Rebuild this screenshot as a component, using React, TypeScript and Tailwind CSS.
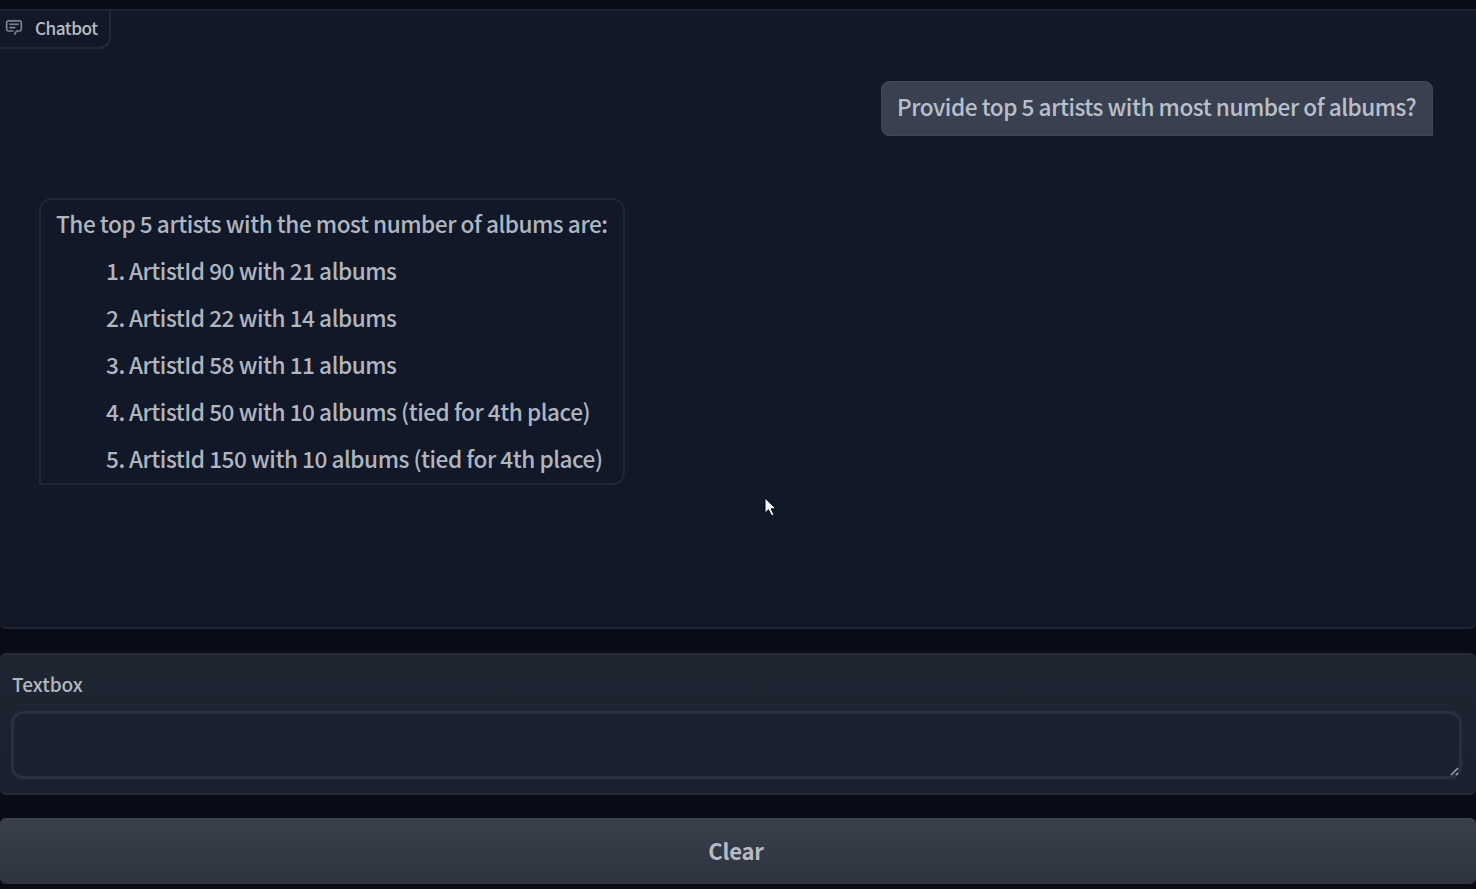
const answers = [
  'ArtistId 90 with 21 albums',
  'ArtistId 22 with 14 albums',
  'ArtistId 58 with 11 albums',
  'ArtistId 50 with 10 albums (tied for 4th place)',
  'ArtistId 150 with 10 albums (tied for 4th place)',
];

function ChatIcon() {
  return (
    <svg className="relative -top-px size-[18px] shrink-0 text-[#8f949e]" viewBox="0 0 32 32" fill="currentColor" stroke="currentColor" strokeWidth="0.6" aria-hidden="true">
      <path d="M17.74 30L16 29l4-7h6a2 2 0 0 0 2-2V8a2 2 0 0 0-2-2H6a2 2 0 0 0-2 2v12a2 2 0 0 0 2 2h9v2H6a4 4 0 0 1-4-4V8a4 4 0 0 1 4-4h20a4 4 0 0 1 4 4v12a4 4 0 0 1-4 4h-4.84Z" />
      <path d="M8 10h16v2H8zM8 16h10v2H8z" />
    </svg>
  );
}

function Chatbot() {
  return (
    <section className="flex h-[620px] flex-col rounded-b-[6px] border-y-2 border-[#20242f] bg-[#111827]">
      <div className="flex h-[38px] w-[111px] items-center gap-[12px] rounded-br-[12px] border-r-2 border-b-2 border-[#242936] pb-[2px] pl-[5px]">
        <ChatIcon />
        <span className="text-[17.2px] leading-6 font-medium tracking-[-0.5px] text-[#b9bcc3]">Chatbot</span>
      </div>
      <div className="mt-[32px] mr-[43px] flex h-[55px] w-[552px] items-center self-end rounded-[8px] rounded-br-none border border-[#404756] bg-[#394150] pb-[4px] pl-[15px]">
        <p className="text-[22.6px] leading-[33px] font-medium tracking-[-0.46px] whitespace-nowrap text-[#b9bfcb]">Provide top 5 artists with most number of albums?</p>
      </div>
      <div className="mt-[62px] ml-[39px] h-[287px] w-[586px] rounded-[12px] rounded-bl-none border-2 border-[#1f2635] pl-[15px] text-[22.6px] leading-[47px] font-medium tracking-[-0.46px] whitespace-nowrap text-[#b0b5c0]">
        <p>The top 5 artists with the most number of albums are:</p>
        <ol>
          {answers.map((answer, i) => (
            <li key={answer} className="flex pl-[50px]">
              <span className="w-[23px]">{i + 1}.</span>
              <span>{answer}</span>
            </li>
          ))}
        </ol>
      </div>
    </section>
  );
}

export default function App() {
  return (
    <main className="relative h-[889px] w-full overflow-hidden bg-[#090c17] pt-[9px] font-['Noto_Sans_CJK_SC',sans-serif]">
      <Chatbot />
      <section className="mt-[24px] h-[142px] rounded-[6px] border-y-2 border-[#242a37] bg-linear-to-b from-[#1e2632] to-[#19212e] px-[11px] pt-[16px]">
        <label htmlFor="message" className="block pl-px text-[19px] leading-[26px] font-medium text-[#b3b7bf]">Textbox</label>
        <div className="relative mt-[14px] mr-[3px] h-[68px]">
          <textarea id="message" className="block h-full w-full resize-none rounded-[12px] border-[3px] border-[#2a303d] bg-[#1b222f] outline-none" />
          <svg className="absolute right-[3px] bottom-[3px] size-[9px]" viewBox="0 0 9 9" fill="none" stroke="#a1a6ae" strokeWidth="1.5" aria-hidden="true">
            <path d="M1 8L8 1M6 8L8 6" />
          </svg>
        </div>
      </section>
      <button className="mt-[23px] block h-[66px] w-full rounded-[6px] border-y-2 border-t-[#3e434d] border-b-[#2e333d] bg-linear-to-b from-[#393f4b] to-[#2e343f] pr-[4px] pb-[2px] text-[22px] font-bold tracking-[-0.2px] text-[#b9bcc2]">
        Clear
      </button>
      <svg className="absolute top-[496px] left-[763px] h-[22px] w-[15px]" viewBox="0 0 15 22" aria-hidden="true">
        <path d="M2 2V17L5.5 13.8L8.7 20L11 19L8.2 12.8H13Z" fill="#f3f4f6" stroke="#080b14" strokeWidth="1" />
      </svg>
    </main>
  );
}
